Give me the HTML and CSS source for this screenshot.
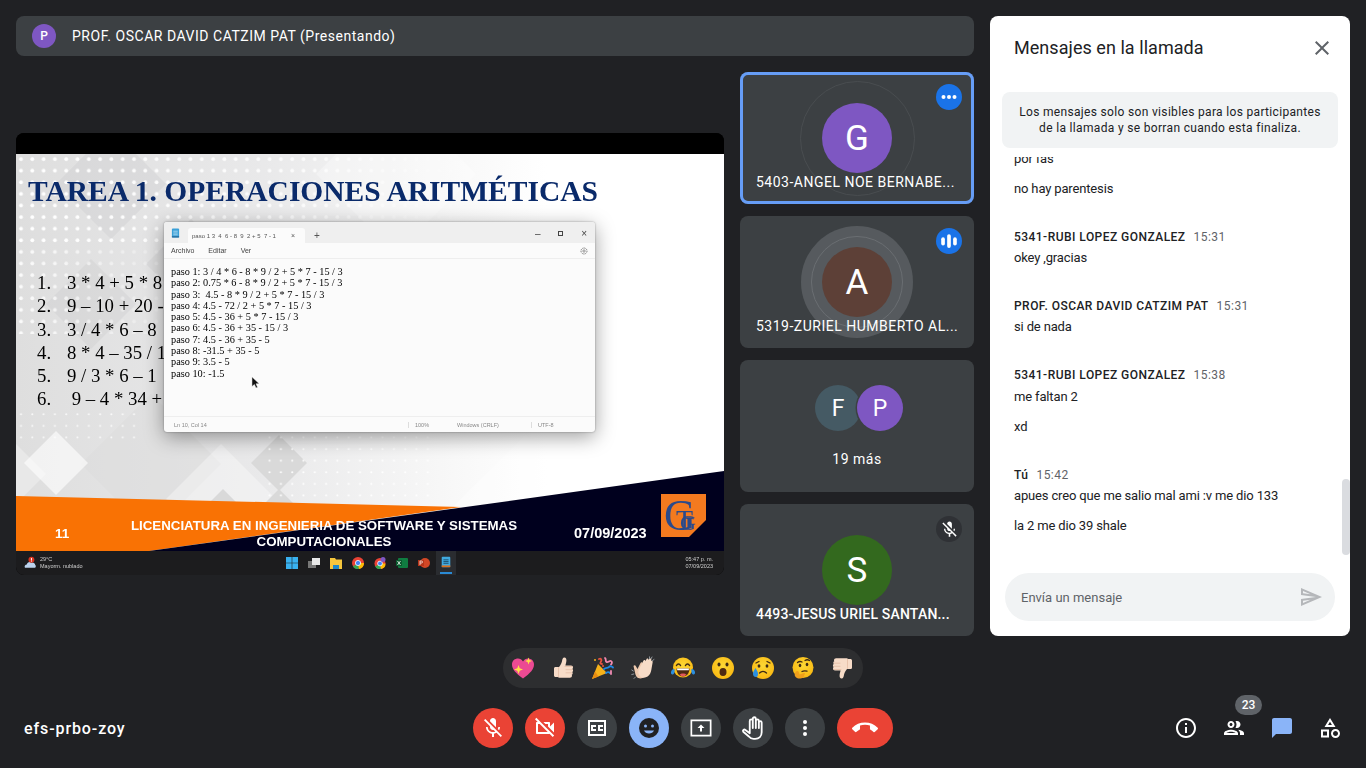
FILE: index.html
```html
<!DOCTYPE html>
<html lang="es">
<head>
<meta charset="utf-8">
<title>Meet</title>
<link rel="stylesheet" href="styles.css">
</head>
<body>
<svg class="defs" width="0" height="0" aria-hidden="true">
  <defs>
    <radialGradient id="face" cx="50%" cy="40%" r="60%"><stop offset="0" stop-color="#fdd835"/><stop offset="1" stop-color="#f9b812"/></radialGradient>
    <symbol id="thumb" viewBox="0 0 24 24">
      <path fill="#f7dcc8" d="M3 12.5c0-1 .7-1.5 1.6-1.5H8c1.2-1.4 2.4-3.4 3-5.8.3-1.500.5-3.400 2-3.700 1.800-.3 2.600 1.500 2.400 3.300-.1 1.700-.7 3.400-1 4.700H20c1.300 0 2 .9 2 1.900 0 .7-.3 1.200-.7 1.500.5.400.8.900.8 1.500 0 .7-.4 1.200-.9 1.500.3.400.5.800.5 1.300 0 .7-.4 1.200-1 1.500.2.300.3.600.3 1 0 1.200-.9 2-2.100 2H9c-1.200 0-1.600-.6-2.300-.8H4.600c-.9 0-1.600-.6-1.600-1.500z"/>
      <path fill="none" stroke="#e3bda3" stroke-width=".8" stroke-linecap="round" d="M14 10.500h7M15 13.700h6.200M15 16.800h5.600M7.500 11.500v9"/>
    </symbol>
  </defs>
</svg>

<main class="main">
  <section class="stage">
    <header class="presenter-bar">
      <span class="mini-avatar">P</span>
      <span class="presenter-name">PROF. OSCAR DAVID CATZIM PAT (Presentando)</span>
    </header>
    <div class="stage-body">
      <div class="screen-wrap">
        <article class="screen">
          <div class="screen-top"></div>
          <div class="slide">
            <svg class="slide-bg" viewBox="0 0 708 397" preserveAspectRatio="none" aria-hidden="true">
              <defs>
                <linearGradient id="slideGrad" x1="0" y1="0" x2="1" y2="0"><stop offset="0" stop-color="#dedede"/><stop offset=".35" stop-color="#e9e9ea"/><stop offset=".58" stop-color="#f6f6f6"/><stop offset=".75" stop-color="#fff"/></linearGradient>
                <pattern id="dots" width="11.3" height="11.6" patternUnits="userSpaceOnUse"><circle cx="5" cy="5" r="1.900" fill="#fff"/></pattern>
                <pattern id="dotsSmall" width="11.3" height="11.6" patternUnits="userSpaceOnUse"><circle cx="5" cy="5" r="1" fill="#fff"/></pattern>
                <linearGradient id="dotFade" x1="0" y1="0" x2="1" y2="0"><stop offset="0" stop-color="#fff"/><stop offset=".6" stop-color="#ccc"/><stop offset="1" stop-color="#000"/></linearGradient>
                <linearGradient id="dotFadeLow" x1="0" y1="0" x2="1" y2="0"><stop offset="0" stop-color="#ddd"/><stop offset="1" stop-color="#000"/></linearGradient>
                <mask id="dotMask"><rect width="480" height="90" fill="url(#dotFade)"/><rect y="90" width="200" height="90" fill="url(#dotFadeLow)"/></mask>
              </defs>
              <rect width="708" height="397" fill="url(#slideGrad)"/>
              <g fill="#c8c8ca" opacity=".3">
                <polygon points="40,30 95,-25 150,30 95,85"/>
                <polygon points="130,110 175,65 220,110 175,155"/>
                <polygon points="30,150 75,105 120,150 75,195"/>
              </g>
              <polygon points="65,310 135,240 205,310 135,380" fill="#dddddd" opacity=".55"/>
              <polygon points="40,277 72,309 40,341 8,309" fill="#fff" opacity=".6"/>
              <polygon points="0,290 30,320 0,350" fill="#fff" opacity=".3"/>
              <polygon points="150,345 205,290 260,345 205,400" fill="#fff" opacity=".35"/>
              <polygon points="300,20 380,-60 460,20 380,100" fill="#fff" opacity=".3"/>
              <polygon points="430,360 510,280 590,360 510,440" fill="#fff" opacity=".4"/>
              <polygon points="235,309 263,281 291,309 263,337" fill="#d9d9d9"/>
              <polygon points="192,350 207,335 222,350" fill="#d9d9d9"/>
              <polygon points="248,350 263,335 278,350" fill="#d9d9d9"/>
              <rect width="480" height="180" fill="url(#dots)" mask="url(#dotMask)"/>
              <rect y="250" width="125" height="36" fill="url(#dotsSmall)" opacity=".8"/>
              <rect x="250" y="268" width="170" height="80" fill="url(#dotsSmall)"/>
              <polygon points="0,342 445,353 133,397 0,397" fill="#f97204"/>
              <polygon points="133,397 708,317 708,397" fill="#00001e"/>
              <polygon points="645,340 690,340 690,366 673,383 645,383" fill="#f47a1f"/>
              <text class="logo-g" x="648" y="376">G</text>
              <text class="logo-t" x="660" y="375">T</text>
              <text class="logo-g2" x="664" y="376">G</text>
            </svg>
            <h1 class="slide-title">TAREA 1. OPERACIONES ARITMÉTICAS</h1>
            <ol class="slide-list">
              <li>3 * 4 + 5 * 8</li>
              <li>9 – 10 + 20 -</li>
              <li>3 / 4 * 6 – 8</li>
              <li>8 * 4 – 35 / 1</li>
              <li>9 / 3 * 6 – 1</li>
              <li>&nbsp;9 – 4 * 34 +</li>
            </ol>
            <div class="slide-foot">
              <span class="foot-num">11</span>
              <span class="foot-title">LICENCIATURA EN INGENIERIA DE SOFTWARE Y SISTEMAS COMPUTACIONALES</span>
              <span class="foot-date">07/09/2023</span>
            </div>
            <div class="notepad">
              <div class="np-tabs">
                <svg class="np-icon" viewBox="0 0 10 12" aria-hidden="true"><rect x="1" y="1" width="8" height="10" rx="1" fill="#3aa0d8"/><path d="M2.500 4h5M2.500 6h5M2.500 8h5" stroke="#dff1fb" stroke-width=".7"/><rect x="1" y="9.500" width="8" height="1.500" fill="#2a6f9e"/></svg>
                <div class="np-tab"><span>paso 1 3  4  6 - 8  9  2 + 5  7 - 1</span><span class="np-x">×</span></div>
                <span class="np-plus">+</span>
                <div class="np-win">
                  <span>–</span><span class="np-max"></span><span>×</span>
                </div>
              </div>
              <div class="np-menu">
                <span>Archivo</span><span>Editar</span><span>Ver</span>
                <svg class="np-gear" viewBox="0 0 24 24" aria-hidden="true"><circle cx="12" cy="12" r="3.500" fill="none" stroke="#666" stroke-width="2"/><circle cx="12" cy="12" r="9" fill="none" stroke="#666" stroke-width="2.500" stroke-dasharray="4 2"/></svg>
              </div>
              <div class="np-text">
                <p>paso 1: 3 / 4 * 6 - 8 * 9 / 2 + 5 * 7 - 15 / 3</p>
                <p>paso 2: 0.75 * 6 - 8 * 9 / 2 + 5 * 7 - 15 / 3</p>
                <p>paso 3: &nbsp;4.5 - 8 * 9 / 2 + 5 * 7 - 15 / 3</p>
                <p>paso 4: 4.5 - 72 / 2 + 5 * 7 - 15 / 3</p>
                <p>paso 5: 4.5 - 36 + 5 * 7 - 15 / 3</p>
                <p>paso 6: 4.5 - 36 + 35 - 15 / 3</p>
                <p>paso 7: 4.5 - 36 + 35 - 5</p>
                <p>paso 8: -31.5 + 35 - 5</p>
                <p>paso 9: 3.5 - 5</p>
                <p>paso 10: -1.5</p>
              </div>
              <div class="np-status">
                <span class="np-st1">Ln 10, Col 14</span>
                <span class="np-st2">100%</span>
                <span class="np-st3">Windows (CRLF)</span>
                <span class="np-st4">UTF-8</span>
              </div>
              <svg class="cursor" viewBox="0 0 12 16" aria-hidden="true"><path d="M1 1v12l3-2.600 2 4.400 2-.9-2-4.300h4z" fill="#111" stroke="#fff" stroke-width=".6"/></svg>
            </div>
          </div>
          <footer class="taskbar">
            <div class="tb-weather">
              <svg class="tb-cloud" viewBox="0 0 14 14" aria-hidden="true"><path d="M1 12c-1-2 .5-3.500 2-3.500C3.500 6 6 5 8 6.500c2-.5 4 .5 4 2.500 1 1 1 2.500 0 3z" fill="#bcd3ee"/><circle cx="8" cy="3.500" r="3.200" fill="#d8341f"/><rect x="7.500" y="1.600" width="1" height="2.700" fill="#fff"/><rect x="7.500" y="4.600" width="1" height=".9" fill="#fff"/></svg>
              <div class="tb-wtext"><span>29°C</span><span>Mayorm. nublado</span></div>
            </div>
            <div class="tb-apps">
              <svg viewBox="0 0 12 12" aria-hidden="true"><path fill="#39b1f0" d="M0 0h5.700v5.700H0zM6.300 0H12v5.700H6.300zM0 6.300h5.700V12H0zM6.300 6.300H12V12H6.300z"/></svg>
              <svg viewBox="0 0 12 12" aria-hidden="true"><rect x="0" y="4" width="8" height="7" fill="#777"/><rect x="4" y="1" width="8" height="7" fill="#e8e8e8"/></svg>
              <svg viewBox="0 0 12 12" aria-hidden="true"><path d="M0 1h5l1 1.500h6V12H0z" fill="#f6c63c"/><rect x="3" y="8" width="6" height="4" fill="#1d88c9"/></svg>
              <svg viewBox="0 0 12 12" aria-hidden="true"><circle cx="6" cy="6" r="6" fill="#e94235"/><path d="M6 6 1 9.500A6 6 0 0 0 7 12z" fill="#34a853"/><path d="M6 6h6a6 6 0 0 1-5 6z" fill="#fbbc04"/><circle cx="6" cy="6" r="2.600" fill="#4285f4" stroke="#fff" stroke-width=".8"/></svg>
              <svg viewBox="0 0 12 12" aria-hidden="true"><circle cx="6" cy="6.500" r="5.500" fill="#e94235"/><path d="M6 6.500 1.200 9.500A5.500 5.500 0 0 0 7 12z" fill="#34a853"/><path d="M6 6.500h5.500a5.500 5.500 0 0 1-4.500 5.500z" fill="#fbbc04"/><circle cx="6" cy="6.500" r="2.400" fill="#4285f4" stroke="#fff" stroke-width=".8"/><circle cx="9" cy="2.500" r="2.500" fill="#7e57c2"/></svg>
              <svg viewBox="0 0 12 12" aria-hidden="true"><rect x="2" y="1" width="10" height="10" rx="1" fill="#107c41"/><rect x="0" y="3" width="6" height="6" fill="#0b5a2e"/><path d="M1.500 4 4.500 8M4.500 4 1.500 8" stroke="#fff" stroke-width=".8"/></svg>
              <svg viewBox="0 0 12 12" aria-hidden="true"><circle cx="7" cy="6" r="5" fill="#d24726"/><rect x="0" y="3" width="6" height="6" fill="#b7351a"/><path d="M2 8V4h1.500a1 1 0 0 1 0 2H2" stroke="#fff" stroke-width=".7" fill="none"/></svg>
              <span class="tb-active"><svg viewBox="0 0 12 14" aria-hidden="true"><rect x="1" y="1" width="10" height="12" rx="1" fill="#40a9e0"/><path d="M3 4.500h6M3 6.500h6M3 8.500h6" stroke="#0d2a40" stroke-width=".8"/><rect x="1" y="11" width="10" height="2" fill="#d9701f"/></svg></span>
            </div>
            <div class="tb-clock"><span>05:47 p. m.</span><span>07/09/2023</span></div>
          </footer>
        </article>
      </div>
      <aside class="tiles">
        <div class="tile tile-active">
          <span class="ring"></span>
          <span class="avatar av-purple">G</span>
          <span class="tile-name">5403-ANGEL NOE BERNABE...</span>
          <span class="tile-badge badge-blue"><svg viewBox="0 0 24 24" aria-hidden="true"><circle cx="6" cy="12" r="2.200"/><circle cx="12" cy="12" r="2.200"/><circle cx="18" cy="12" r="2.200"/></svg></span>
        </div>
        <div class="tile">
          <span class="ring-speaking"></span>
          <span class="avatar av-brown">A</span>
          <span class="tile-name">5319-ZURIEL HUMBERTO AL...</span>
          <span class="tile-badge badge-blue"><svg viewBox="0 0 24 24" aria-hidden="true"><rect x="3.500" y="8" width="4" height="9" rx="2"/><rect x="10" y="4.500" width="4" height="15" rx="2"/><rect x="16.500" y="8" width="4" height="9" rx="2"/></svg></span>
        </div>
        <div class="tile tile-group">
          <div class="avatar-pair">
            <span class="avatar-sm av-slate">F</span>
            <span class="avatar-sm av-purple av-over">P</span>
          </div>
          <span class="more-label">19 más</span>
        </div>
        <div class="tile">
          <span class="avatar av-green">S</span>
          <span class="tile-name tile-name-bold">4493-JESUS URIEL SANTAN...</span>
          <span class="tile-badge badge-dark"><svg class="badge-mic" viewBox="0 0 24 24" aria-hidden="true"><path d="M19 11h-1.700c0 .74-.16 1.430-.43 2.050l1.230 1.230c.56-.98.9-2.090.9-3.280zm-4.020.17c0-.06.02-.11.02-.17V5c0-1.660-1.340-3-3-3S9 3.340 9 5v.18l5.980 5.990zM4.270 3L3 4.270l6.010 6.010V11c0 1.660 1.330 3 2.990 3 .22 0 .44-.03.65-.08l1.660 1.660c-.71.33-1.500.52-2.310.52-2.760 0-5.300-2.100-5.300-5.100H5c0 3.410 2.720 6.230 6 6.720V21h2v-3.280c.91-.13 1.770-.45 2.540-.9L19.730 21 21 19.730 4.270 3z"/></svg></span>
        </div>
      </aside>
    </div>
  </section>

  <section class="chat">
    <header class="chat-head">
      <h2>Mensajes en la llamada</h2>
      <svg class="chat-close" viewBox="0 0 24 24" aria-hidden="true"><path d="M19 6.410L17.590 5 12 10.590 6.410 5 5 6.410 10.590 12 5 17.590 6.410 19 12 13.410 17.590 19 19 17.590 13.410 12z"/></svg>
    </header>
    <p class="chat-notice">Los mensajes solo son visibles para los participantes de la llamada y se borran cuando esta finaliza.</p>
    <div class="chat-log-wrap">
      <div class="chat-log">
        <p class="msg">por fas</p>
        <p class="msg msg-next">no hay parentesis</p>
        <div class="msg-group">
          <div class="msg-meta"><b>5341-RUBI LOPEZ GONZALEZ</b><time>15:31</time></div>
          <p class="msg">okey ,gracias</p>
        </div>
        <div class="msg-group">
          <div class="msg-meta"><b>PROF. OSCAR DAVID CATZIM PAT</b><time>15:31</time></div>
          <p class="msg">si de nada</p>
        </div>
        <div class="msg-group">
          <div class="msg-meta msg-meta-tall"><b>5341-RUBI LOPEZ GONZALEZ</b><time>15:38</time></div>
          <p class="msg">me faltan 2</p>
          <p class="msg msg-next">xd</p>
        </div>
        <div class="msg-group">
          <div class="msg-meta"><b>Tú</b><time>15:42</time></div>
          <p class="msg">apues creo que me salio mal ami :v me dio 133</p>
          <p class="msg msg-next">la 2 me dio 39 shale</p>
        </div>
      </div>
      <span class="chat-scroll"></span>
    </div>
    <div class="chat-input">
      <span>Envía un mensaje</span>
      <svg viewBox="0 0 24 24" aria-hidden="true"><path d="M4.010 6.030l7.510 3.220-7.520-1 .01-2.220m7.500 8.720L4 17.970v-2.220l7.510-1M2.010 3L2 10l15 2-15 2 .01 7L23 12 2.010 3z"/></svg>
    </div>
  </section>
</main>

<div class="reactions-row">
  <div class="reactions">
    <svg viewBox="0 0 24 24" aria-hidden="true"><path fill="#ec4a93" d="M12 22.500C4.500 17 1 13 1 8.500 1 4.500 4 2.500 7 2.500c2 0 4 1.200 5 3 1-1.800 3-3 5-3 3 0 6 2 6 6 0 4.500-3.500 8.500-11 14z"/><path fill="#fde047" d="M7.500 9l1.200 3.300L12 13.500l-3.300 1.200L7.500 18l-1.200-3.300L3 13.500l3.300-1.200zM17.500 1.500l.9 2.600 2.600.9-2.600.9-.9 2.600-.9-2.600L14 5l2.600-.9z"/></svg>
    <svg viewBox="0 0 24 24" aria-hidden="true"><use href="#thumb"/></svg>
    <svg viewBox="0 0 24 24" aria-hidden="true"><path fill="#f6b21a" d="M1 23 7 8l9 9z"/><path fill="#e88d12" d="M1 23l3-7.500 3.500 5z"/><g fill="none" stroke-width="1.800" stroke-linecap="round"><path stroke="#e8533f" d="M8 3c2-1 3 1 2 2.500S9 8 11 8"/><path stroke="#f28ab0" d="M14 2c1.500 1 0 3 1.500 4s3-1.500 4.500-1 1 2.500 0 3.500"/><path stroke="#1e88e5" d="M13 13c2-2 4-.5 5-2s3-.5 4 .5M15 17c1.500-1 3-1 4 0"/><path stroke="#f28ab0" d="M20 15v3"/></g><circle cx="4" cy="4" r="1" fill="#f6b21a"/><circle cx="12" cy="10" r="1" fill="#e8533f"/></svg>
    <svg viewBox="0 0 24 24" aria-hidden="true"><path fill="#eec9ae" d="M2.500 10c.6-1 2-.8 2.400.3l1.600 2.700 3-6c.8-1.300 2.400-.5 2 .8l3 9c0 3-2 5.700-5 5.700-3.500 0-5-3-5.500-6z"/><path fill="#f7dcc8" d="M8 13.500 12.500 4.500c.7-1.100 2.100-.4 1.900.7l1.200-2.200c.8-1 2.200-.2 1.900 1l1-1.200c.8-.8 2.100 0 1.800 1.100l-.3 1c.9-.6 1.900.2 1.700 1.200l-1.300 7.400c-.5 3.500-1.700 5.600-3.800 7.100-2.600 1.800-6.200 1.400-8-.9C7.100 18 7 15.500 8 13.500z"/><path fill="none" stroke="#9aa0a6" stroke-width=".9" stroke-linecap="round" d="M.8 14l1.500 1M.8 18.500l2-.5M3 22.500l1.500-1.500M18.500 .8v1.700M21 1l-1 1.800M23 3.500l-1.500 1"/></svg>
    <svg viewBox="0 0 24 24" aria-hidden="true"><circle cx="12" cy="11.500" r="10" fill="url(#face)"/><path fill="none" stroke="#3e2a15" stroke-width="1.500" stroke-linecap="round" d="M5.500 9.500c1-2 3-2 4 0M14.500 9.500c1-2 3-2 4 0"/><path fill="#4e2a12" d="M5.500 12.500h13c0 5-3 8-6.500 8s-6.500-3-6.500-8z"/><path fill="#fff" d="M6 12.500h12l-.3 1.800H6.300z"/><path fill="#e2585b" d="M8.500 18.500c1.500-1.500 5.500-1.500 7 0-2 2.500-5 2.500-7 0z"/><path fill="#2b8fe0" d="M0 16c.5-2 1.500-3 3.500-3 .5 2-.2 5.500-2 5.500-1 0-1.700-1-1.500-2.500zM24 16c-.5-2-1.500-3-3.500-3-.5 2 .2 5.500 2 5.500 1 0 1.700-1 1.500-2.500z"/></svg>
    <svg viewBox="0 0 24 24" aria-hidden="true"><circle cx="12" cy="12" r="11" fill="url(#face)"/><ellipse cx="8" cy="8.500" rx="1.500" ry="2" fill="#3e2a15"/><ellipse cx="16" cy="8.500" rx="1.500" ry="2" fill="#3e2a15"/><ellipse cx="12" cy="16" rx="3.500" ry="4" fill="#4e2a12"/></svg>
    <svg viewBox="0 0 24 24" aria-hidden="true"><circle cx="12" cy="12" r="11" fill="url(#face)"/><ellipse cx="8" cy="10" rx="1.400" ry="1.800" fill="#3e2a15"/><ellipse cx="16" cy="10" rx="1.400" ry="1.800" fill="#3e2a15"/><path fill="none" stroke="#3e2a15" stroke-width="1.300" stroke-linecap="round" d="M5 7l3-1.500M19 7l-3-1.500M8.500 17c2-2 5-2 7 0"/><path fill="#2b8fe0" d="M4.500 12c-1.500 2.500-2.500 4-2.500 6s1.300 3 2.800 3S7 20 7 18s-1-3.500-2.500-6z"/></svg>
    <svg viewBox="0 0 24 24" aria-hidden="true"><circle cx="12" cy="11.500" r="10.500" fill="url(#face)"/><ellipse cx="9" cy="9.500" rx="1.300" ry="1.700" fill="#3e2a15"/><ellipse cx="16" cy="8.500" rx="1.300" ry="1.700" fill="#3e2a15"/><path fill="none" stroke="#3e2a15" stroke-width="1.300" stroke-linecap="round" d="M6.500 6.500C8 5.300 9.500 5.300 11 6M14 4.500c1.500-1 3-1 4.500 0M11 15.500c1.500-.8 3-.8 5-.3"/><path fill="#f0a01c" d="M5 15.500c1-1 2.500-.5 2.800.8l.7 2.200 4.500-1.500c1-.2 1.500 1 .8 1.500l-1 .5c.8.700.3 1.700-.3 2-1.500 1.500-4 2-6 1.300-2-.8-3-2.300-2.800-4 .2-1 .5-1.800 1.300-2.800z"/></svg>
    <svg viewBox="0 0 24 24" aria-hidden="true"><use href="#thumb" transform="rotate(180 12 12)"/></svg>
  </div>
</div>

<footer class="toolbar">
  <div class="meeting-code">efs-prbo-zoy</div>
  <div class="controls">
    <span class="ctl ctl-red"><svg viewBox="0 0 24 24" aria-hidden="true"><path d="M19 11h-1.700c0 .74-.16 1.430-.43 2.050l1.230 1.230c.56-.98.9-2.090.9-3.280zm-4.020.17c0-.06.02-.11.02-.17V5c0-1.660-1.340-3-3-3S9 3.340 9 5v.18l5.980 5.990zM4.270 3L3 4.270l6.010 6.010V11c0 1.660 1.330 3 2.990 3 .22 0 .44-.03.65-.08l1.660 1.660c-.71.33-1.500.52-2.310.52-2.760 0-5.300-2.100-5.300-5.100H5c0 3.410 2.720 6.230 6 6.720V21h2v-3.280c.91-.13 1.770-.45 2.540-.9L19.730 21 21 19.730 4.270 3z"/></svg></span>
    <span class="ctl ctl-red"><svg viewBox="0 0 24 24" aria-hidden="true"><path d="M9.560 8l-2-2-4.150-4.140L2 3.270 4.730 6H4c-.55 0-1 .45-1 1v10c0 .55.45 1 1 1h12c.21 0 .39-.08.55-.18L19.730 21l1.410-1.410-8.860-8.860L9.560 8zM5 16V8h1.730l8 8H5zm10-8v2.610l6 6V6.500l-4 4V7c0-.55-.45-1-1-1h-5.610l2 2H15z"/></svg></span>
    <span class="ctl"><svg viewBox="0 0 24 24" aria-hidden="true"><path d="M3 4h18v16H3zm2 2v12h14V6zm1 3h5v2H8v2h3v2H6zm7 0h5v2h-3v2h3v2h-5z" fill-rule="evenodd"/></svg></span>
    <span class="ctl ctl-light"><svg viewBox="0 0 24 24" aria-hidden="true"><circle cx="12" cy="12" r="10" fill="#202124"/><circle cx="8.500" cy="10" r="1.500" fill="#8ab4f8"/><circle cx="15.500" cy="10" r="1.500" fill="#8ab4f8"/><path d="M7 14.500h10c-.8 2-2.700 3-5 3s-4.200-1-5-3z" fill="#8ab4f8"/></svg></span>
    <span class="ctl"><svg viewBox="0 0 24 24" aria-hidden="true"><path d="M1.500 3.500h21v17h-21zm1.700 1.700v13.600h17.600V5.200zM12 8.500l3.500 3.500H13v3.500h-2V12H8.500z" fill-rule="evenodd"/></svg></span>
    <span class="ctl"><svg class="hand" viewBox="0 0 24 24" aria-hidden="true"><path d="M9 13V5.500a1.400 1.400 0 0 1 2.800 0V3.500a1.400 1.400 0 0 1 2.800 0v2a1.400 1.400 0 0 1 2.800 0v1.500a1.300 1.300 0 0 1 2.600 0v9c0 3.500-2.500 6-6 6h-1.500c-2 0-3.200-.8-4.300-2.200L3 15.500c-.9-1.200.7-2.700 2-1.700l4 3zM11.800 5.500V12M14.600 3.500V12M17.400 5.500V12"/></svg></span>
    <span class="ctl"><svg viewBox="0 0 24 24" aria-hidden="true"><circle cx="12" cy="6" r="2"/><circle cx="12" cy="12" r="2"/><circle cx="12" cy="18" r="2"/></svg></span>
    <span class="ctl ctl-end"><svg viewBox="0 0 24 24" aria-hidden="true"><path d="M12 9c-1.600 0-3.150.25-4.600.72v3.100c0 .39-.23.74-.56.9-.98.49-1.870 1.120-2.660 1.850-.18.18-.43.28-.7.28-.28 0-.53-.11-.71-.29L.29 13.080c-.18-.17-.29-.42-.29-.7 0-.28.11-.53.29-.71C3.340 8.780 7.460 7 12 7s8.660 1.780 11.710 4.670c.18.18.29.43.29.71 0 .28-.11.53-.29.71l-2.480 2.480c-.18.18-.43.29-.71.29-.27 0-.52-.11-.7-.28-.79-.74-1.690-1.360-2.670-1.850-.33-.16-.56-.5-.56-.9v-3.100C15.150 9.250 13.600 9 12 9z"/></svg></span>
  </div>
  <div class="side-actions">
    <span class="side-btn"><svg viewBox="0 0 24 24" aria-hidden="true"><path d="M11 7h2v2h-2zm0 4h2v6h-2zm1-9C6.480 2 2 6.480 2 12s4.480 10 10 10 10-4.480 10-10S17.520 2 12 2zm0 18c-4.410 0-8-3.590-8-8s3.590-8 8-8 8 3.590 8 8-3.590 8-8 8z"/></svg></span>
    <span class="side-btn"><svg viewBox="0 0 24 24" aria-hidden="true"><path d="M9 13.750c-2.340 0-7 1.170-7 3.500V19h14v-1.750c0-2.330-4.660-3.500-7-3.500zM4.340 17c.84-.58 2.870-1.250 4.660-1.250s3.820.67 4.660 1.250H4.340zM9 12c1.930 0 3.500-1.570 3.500-3.500S10.930 5 9 5 5.500 6.570 5.500 8.500 7.070 12 9 12zm0-5c.83 0 1.500.67 1.500 1.500S9.830 10 9 10s-1.500-.67-1.500-1.500S8.170 7 9 7zm7.040 6.810c1.160.84 1.960 1.960 1.960 3.440V19h4v-1.750c0-2.020-3.500-3.170-5.960-3.440zM15 12c1.930 0 3.500-1.570 3.500-3.500S16.930 5 15 5c-.54 0-1.040.13-1.500.35.630.89 1 1.980 1 3.150s-.37 2.260-1 3.150c.46.22.96.35 1.500.35z"/></svg><span class="count-badge">23</span></span>
    <span class="side-btn side-on"><svg viewBox="0 0 24 24" aria-hidden="true"><path d="M20 2H4c-1.100 0-2 .9-2 2v18l4-4h14c1.100 0 2-.9 2-2V4c0-1.100-.9-2-2-2z"/></svg></span>
    <span class="side-btn"><svg viewBox="0 0 24 24" aria-hidden="true"><path d="M12 2l-5.500 9h11L12 2zm0 3.840L13.930 9h-3.870L12 5.840zM17.500 13c-2.490 0-4.500 2.010-4.500 4.500s2.010 4.500 4.500 4.500 4.500-2.010 4.500-4.500-2.010-4.500-4.500-4.500zm0 7c-1.380 0-2.500-1.120-2.500-2.500s1.120-2.500 2.500-2.500 2.500 1.120 2.500 2.500-1.120 2.500-2.500 2.500zM3 21.500h8v-8H3v8zm2-6h4v4H5v-4z"/></svg></span>
  </div>
</footer>
</body>
</html>
```

FILE: styles.css
```css
* { box-sizing: border-box; }
html, body { height: 100%; }
body {
  margin: 0;
  width: 1366px;
  height: 768px;
  overflow: hidden;
  background: #202124;
  color: #fff;
  font-family: Roboto, "Noto Sans", sans-serif;
}
p, h1, h2, ol { margin: 0; padding: 0; }
.defs { display: block; height: 0; }

.main { display: flex; gap: 16px; padding: 16px 16px 0; height: 636px; }
.stage { width: 958px; display: flex; flex-direction: column; }

.presenter-bar {
  height: 40px; flex: none; display: flex; align-items: center; gap: 16px;
  padding-left: 16px; background: #3c4043; border-radius: 8px;
}
.mini-avatar {
  width: 24px; height: 24px; border-radius: 50%; background: #7e57c2;
  display: flex; align-items: center; justify-content: center;
  font-size: 12px; font-weight: 500;
}
.presenter-name { font-size: 14px; letter-spacing: .52px; margin-top: -1px; }

.stage-body { flex: 1; display: flex; gap: 16px; padding-top: 16px; }
.screen-wrap { width: 708px; display: flex; align-items: flex-start; padding-top: 61px; }
.screen { width: 708px; height: 442px; border-radius: 8px; overflow: hidden; background: #000; display: flex; flex-direction: column; filter: blur(.3px); }
.screen-top { height: 21px; flex: none; background: #000; }

.slide { position: relative; height: 397px; flex: none; overflow: hidden; color: #000; font-family: "Liberation Serif", serif; }
.slide-bg { position: absolute; inset: 0; width: 100%; height: 100%; }
.logo-g { font-family: "Liberation Serif", serif; font-size: 44px; fill: #2b4a8b; }
.logo-g2 { font-family: "Liberation Serif", serif; font-size: 22px; fill: #2b4a8b; }
.logo-t { font-family: "Liberation Serif", serif; font-size: 28px; fill: #2b4a8b; }
.slide-title {
  position: relative; padding: 21px 0 0 12px; font-size: 29.500px; line-height: 32px;
  font-weight: 700; color: #0a2a6a; white-space: nowrap;
}
.slide-list { position: relative; list-style: none; counter-reset: item; padding: 64px 0 0 21px; font-size: 18.800px; line-height: 23.300px; }
.slide-list li { counter-increment: item; white-space: nowrap; display: flex; }
.slide-list li::before { content: counter(item) "."; width: 30px; flex: none; }
.slide-foot {
  position: absolute; left: 0; right: 0; bottom: 0; height: 34px; display: flex; align-items: center;
  font-family: "Liberation Sans", sans-serif; font-weight: 700; color: #fff;
}
.foot-num { width: 93px; padding-left: 39px; font-size: 13.500px; margin-bottom: 2px; }
.foot-title { width: 430px; padding: 0 8px; text-align: center; font-size: 13.300px; line-height: 16px; }
.foot-date { padding-left: 35px; font-size: 14.500px; margin-bottom: 2px; }

.notepad {
  position: absolute; left: 148px; top: 68px; width: 431px; height: 210px;
  background: #fbfbfb; border-radius: 3px; box-shadow: 0 5px 20px rgba(0,0,0,.38), 0 0 2px rgba(0,0,0,.4);
  display: flex; flex-direction: column; font-family: "Liberation Sans", sans-serif;
}
.np-tabs { height: 21px; flex: none; background: #efefef; border-radius: 3px 3px 0 0; display: flex; align-items: flex-end; padding-left: 7px; position: relative; color: #555; }
.np-icon { width: 9px; height: 12px; margin: 0 8px 4px 0; flex: none; }
.np-tab { width: 117px; height: 15px; background: #fbfbfb; border-radius: 3px 3px 0 0; display: flex; align-items: center; justify-content: space-between; padding: 0 10px 0 4px; font-size: 6px; white-space: pre; }
.np-x { font-size: 7px; }
.np-plus { font-size: 10px; margin: 0 0 2px 9px; }
.np-win { margin: 0 8px 2px auto; width: 52px; height: 16px; display: flex; align-items: center; justify-content: space-between; font-size: 10px; color: #444; }
.np-max { width: 5px; height: 5px; border: 1px solid #444; }
.np-menu { height: 16px; flex: none; display: flex; align-items: center; gap: 14px; padding: 0 7px; font-size: 7px; color: #444; border-bottom: 1px solid #eee; }
.np-gear { width: 8px; height: 8px; margin-left: auto; }
.np-text { flex: 1; padding: 7px 0 0 7px; font-family: "Liberation Serif", serif; font-size: 10.300px; line-height: 11.300px; color: #000; }
.np-text p { white-space: pre; }
.np-status { height: 16px; flex: none; display: flex; align-items: center; font-size: 5.500px; color: #888; border-top: 1px solid #eee; }
.np-st1 { width: 244px; padding-left: 10px; }
.np-st2 { width: 49px; padding-left: 6px; border-left: 1px solid #ddd; }
.np-st3 { width: 74px; }
.np-st4 { padding-left: 6px; border-left: 1px solid #ddd; }
.cursor { position: absolute; left: 87px; top: 154px; width: 10px; height: 13px; }

.taskbar { height: 24px; flex: none; background: #1c1c1e; display: grid; grid-template-columns: 1fr auto 1fr; align-items: center; padding: 0 11px 0 8px; }
.tb-weather { display: flex; align-items: center; gap: 3px; }
.tb-cloud { width: 13px; height: 14px; }
.tb-wtext, .tb-clock { display: flex; flex-direction: column; font-family: "Liberation Sans", sans-serif; font-size: 5.500px; line-height: 7.500px; color: #cfcfcf; }
.tb-clock { text-align: right; }
.tb-apps { display: flex; align-items: center; gap: 10px; }
.tb-apps svg { width: 12px; height: 12px; display: block; }
.tb-active { display: flex; align-items: center; justify-content: center; width: 12px; height: 21px; background: #2a2c30; box-shadow: 0 0 0 4px #2a2c30; border-bottom: 2px solid #2a8ad4; }

.tiles { width: 234px; display: flex; flex-direction: column; gap: 12px; }
.tile { position: relative; height: 132px; background: #3c4043; border-radius: 8px; display: flex; flex-direction: column; align-items: center; padding-top: 31px; }
.tile-active { box-shadow: inset 0 0 0 3px #669df6; }
.avatar { position: relative; width: 70px; height: 70px; border-radius: 50%; display: flex; align-items: center; justify-content: center; font-size: 35px; flex: none; }
.av-purple { background: #7e57c2; }
.av-brown { background: #5d4037; }
.av-green { background: #33691e; }
.av-slate { background: #455a64; }
.ring { position: absolute; left: 59.500px; top: 8.500px; width: 115px; height: 115px; border-radius: 50%; border: 1.500px solid #494d50; }
.ring-speaking { position: absolute; left: 61px; top: 10px; width: 112px; height: 112px; border-radius: 50%; background: #565a5e; }
.ring-speaking::after { content: ""; position: absolute; inset: 10px; border-radius: 50%; border: 1.500px solid #6a6e72; }
.tile-name { position: relative; align-self: stretch; padding-left: 16px; font-size: 14px; line-height: 18px; font-weight: 400; letter-spacing: .5px; white-space: nowrap; }
.tile-name-bold { font-weight: 500; letter-spacing: .18px; }
.tile-badge { position: absolute; right: 12px; top: 12px; width: 26px; height: 26px; border-radius: 50%; display: flex; align-items: center; justify-content: center; }
.tile-badge svg { width: 22px; height: 22px; fill: #fff; }
.tile-badge .badge-mic { width: 19px; height: 19px; }
.badge-blue { background: #1a73e8; }
.badge-dark { background: #2f3135; }
.tile-group { padding-top: 25px; }
.avatar-pair { display: flex; margin-left: 4px; }
.avatar-sm { width: 46px; height: 46px; border-radius: 50%; display: flex; align-items: center; justify-content: center; font-size: 23px; }
.av-over { margin-left: -4px; position: relative; box-shadow: 0 0 0 1.500px #3c4043; }
.more-label { margin-top: 18px; font-size: 14px; line-height: 20px; letter-spacing: .5px; }

.chat { width: 360px; height: 620px; background: #fff; border-radius: 8px; color: #202124; display: flex; flex-direction: column; }
.chat-head { height: 64px; flex: none; display: flex; align-items: center; justify-content: space-between; padding: 0 16px 0 24px; }
.chat-head h2 { font-size: 18px; font-weight: 400; letter-spacing: .05px; margin-top: -2px; }
.chat-close { width: 24px; height: 24px; fill: #5f6368; }
.chat-notice { flex: none; height: 56px; margin: 12px 12px 9px; padding: 12px 14px; background: #f1f3f4; border-radius: 8px; text-align: center; font-size: 12px; line-height: 16px; letter-spacing: .33px; }
.chat-log-wrap { position: relative; height: 403px; flex: none; overflow: hidden; }
.chat-log { position: absolute; left: 24px; right: 20px; bottom: 24px; font-size: 13px; }
.msg { line-height: 20px; letter-spacing: -.15px; white-space: nowrap; }
.msg-next { margin-top: 10px; }
.msg-group { margin-top: 29px; }
.msg-meta { display: flex; gap: 8px; font-size: 12px; line-height: 18px; margin-bottom: 2px; letter-spacing: .46px; align-items: baseline; }
.msg-meta-tall { margin-bottom: 3px; }
.msg-meta b { font-weight: 500; }
.msg-meta time { color: #5f6368; }
.chat-scroll { position: absolute; right: 0; top: 322px; width: 8px; height: 76px; border-radius: 4px; background: #dadce0; }
.chat-input { flex: none; margin: 13px 15px 0; height: 48px; background: #f1f3f4; border-radius: 24px; display: flex; align-items: center; justify-content: space-between; padding: 0 12px 0 16px; font-size: 13px; letter-spacing: 0; color: #5f6368; }
.chat-input svg { width: 24px; height: 24px; fill: #b5b7ba; }

.reactions-row { display: flex; justify-content: center; padding-top: 12px; }
.reactions { width: 360px; height: 40px; border-radius: 20px; background: #2d2e30; display: flex; align-items: center; justify-content: center; gap: 16px; }
.reactions svg { width: 24px; height: 24px; flex: none; }

.toolbar { display: grid; grid-template-columns: 1fr auto 1fr; align-items: center; height: 40px; margin-top: 20px; padding: 0 12px; }
.meeting-code { padding-left: 12px; font-size: 16px; font-weight: 500; letter-spacing: .9px; }
.controls { display: flex; gap: 12px; }
.ctl { width: 40px; height: 40px; border-radius: 20px; background: #3c4043; display: flex; align-items: center; justify-content: center; }
.ctl svg { width: 24px; height: 24px; fill: #fff; }
.ctl-red { background: #ea4335; }
.ctl-light { background: #8ab4f8; }
.ctl-end { width: 56px; background: #ea4335; }
.ctl-end svg { width: 26px; height: 26px; }
.ctl .hand { fill: none; stroke: #fff; stroke-width: 1.700; stroke-linejoin: round; stroke-linecap: round; width: 26px; height: 26px; }
.side-actions { display: flex; justify-content: flex-end; }
.side-btn { position: relative; width: 48px; height: 40px; display: flex; align-items: center; justify-content: center; }
.side-btn svg { width: 24px; height: 24px; fill: #fff; }
.side-on svg { fill: #8ab4f8; }
.count-badge { position: absolute; left: 25px; top: -13px; width: 27px; height: 20px; border-radius: 10px; background: #5f6368; font-size: 12px; line-height: 20px; text-align: center; font-weight: 500; }
```
